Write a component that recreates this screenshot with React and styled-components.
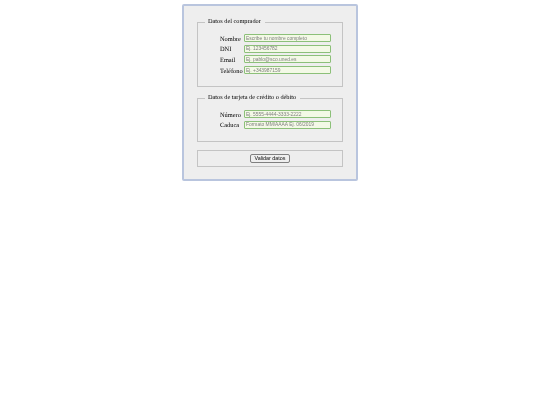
import React from "react";
import styled, { createGlobalStyle } from "styled-components";

const GlobalStyle = createGlobalStyle`
  html, body {
    margin: 0;
    padding: 0;
    background: #fff;
  }
`;

const Page = styled.div`
  display: flex;
  justify-content: center;
  padding-top: 4px;
`;

// the reference is a scaled down capture, hence the slight blur
const Form = styled.form`
  box-sizing: border-box;
  width: 176px;
  height: 177px;
  padding: 12px 13px 0 13px;
  background: #eeeeee;
  border: 2px solid #b9c5de;
  border-radius: 2px;
  font-family: "Liberation Serif", "Times New Roman", serif;
  color: #000;
  text-rendering: geometricPrecision;
  filter: blur(0.4px);
`;

const Group = styled.fieldset`
  box-sizing: border-box;
  height: ${(p) => p.$height}px;
  margin: 0 0 ${(p) => p.$gap}px 0;
  padding: 0 0 0 22px;
  border: 1px solid #c4c4c4;
  min-width: 0;
`;

const Legend = styled.legend`
  margin-left: -15px;
  padding: 0 4px 0 3px;
  font-size: 6.3px;
  line-height: 8px;
`;

const Rows = styled.div`
  display: flex;
  flex-direction: column;
  gap: 2.7px;
  padding-top: ${(p) => p.$top}px;
`;

const Row = styled.label`
  display: flex;
  align-items: center;
  height: 8px;
  font-size: 6.4px;
`;

const Name = styled.span`
  width: 24px;
  flex: none;
  padding-top: 2px;
  white-space: nowrap;
`;

const Field = styled.input`
  box-sizing: border-box;
  width: 87px;
  height: 8px;
  margin: 0;
  padding: 0 1px;
  background: #f3f9e6;
  border: 1px solid #8cc079;
  border-radius: 1px;
  outline: none;
  font-family: "Liberation Sans", Arial, sans-serif;
  font-size: 4.9px;

  &::placeholder {
    color: #808080;
    opacity: 1;
  }
`;

const Actions = styled.div`
  box-sizing: border-box;
  height: 17px;
  display: flex;
  justify-content: center;
  align-items: center;
  border: 1px solid #c4c4c4;
`;

const Submit = styled.button`
  box-sizing: border-box;
  width: 40px;
  height: 9px;
  padding: 0;
  background: #efefef;
  border: 1px solid #808080;
  border-radius: 2px;
  font-family: "Liberation Sans", Arial, sans-serif;
  font-size: 5.4px;
  line-height: 7px;
  color: #111;
`;

const buyer = [
  ["Nombre", "Escribe tu nombre completo"],
  ["DNI", "Ej. 123456782"],
  ["Email", "Ej. pablo@sco.uned.es"],
  ["Teléfono", "Ej. +343987159"],
];

const card = [
  ["Número", "Ej. 5555-4444-3333-2222"],
  ["Caduca", "Formato MM/AAAA Ej. 06/2019"],
];

const App = () => (
  <Page>
    <GlobalStyle />
    <Form onSubmit={(e) => e.preventDefault()}>
      <Group $height={69} $gap={7}>
        <Legend>Datos del comprador</Legend>
        <Rows $top={8}>
          {buyer.map(([name, hint]) => (
            <Row key={name}>
              <Name>{name}</Name>
              <Field placeholder={hint} />
            </Row>
          ))}
        </Rows>
      </Group>
      <Group $height={48} $gap={8}>
        <Legend>Datos de tarjeta de crédito o débito</Legend>
        <Rows $top={8}>
          {card.map(([name, hint]) => (
            <Row key={name}>
              <Name>{name}</Name>
              <Field placeholder={hint} />
            </Row>
          ))}
        </Rows>
      </Group>
      <Actions>
        <Submit type="submit">Validar datos</Submit>
      </Actions>
    </Form>
  </Page>
);

export default App;
